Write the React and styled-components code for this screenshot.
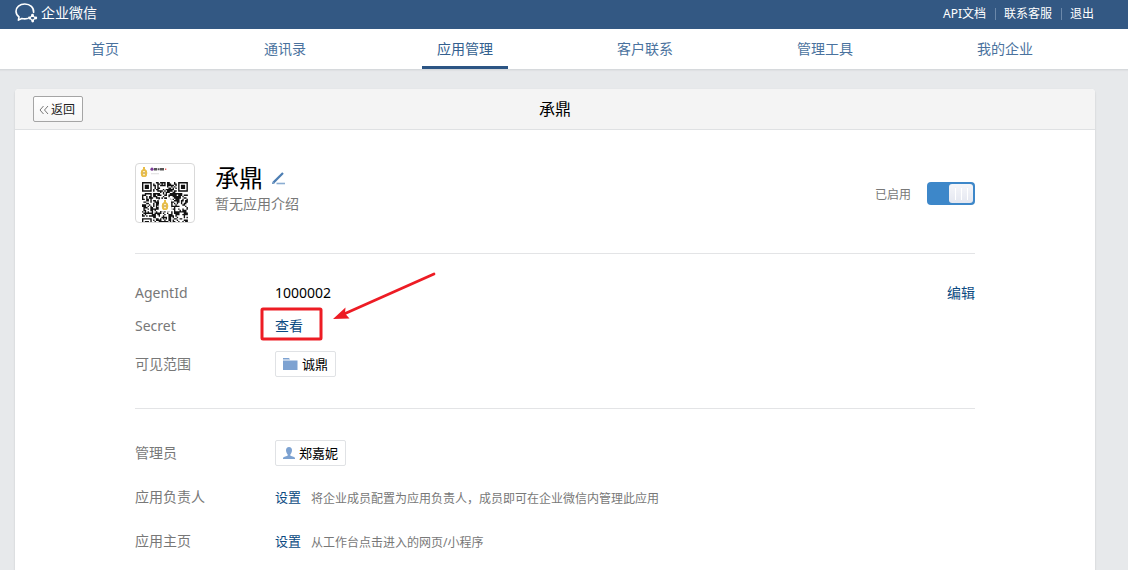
import React from "react";
import styled, { createGlobalStyle } from "styled-components";

const GlobalStyle = createGlobalStyle`
  * { box-sizing: border-box; }
  body {
    margin: 0;
    background: #e7e9eb;
    color: #000;
    font: 14px/22px "Noto Sans", "Noto Sans CJK SC", sans-serif;
  }
  a { text-decoration: none; color: #0b4a82; }
  h1, h2, p, dl, dt, dd { margin: 0; padding: 0; font-weight: 400; }
  button, input { font: inherit; margin: 0; }
  svg { display: block; flex: none; }
`;

const Page = styled.div`
  min-height: 100vh;
  display: flex;
  flex-direction: column;
`;

const TopBar = styled.header`
  height: 29px;
  padding: 0 34px 0 15px;
  display: flex;
  align-items: center;
  justify-content: space-between;
  background: #335883;
`;

const Brand = styled.a`
  display: flex;
  align-items: center;
  gap: 3px;
  height: 26px;
  align-self: flex-start;
  color: #fff;
  line-height: 26px;
`;

const TopLinks = styled.nav`
  display: flex;
  align-items: center;
  height: 28px;
  align-self: flex-start;
  font-size: 12px;
`;

const TopLink = styled.a`
  color: #fff;
  line-height: 16px;
  & + & {
    position: relative;
    margin-left: 9px;
    padding-left: 9px;
  }
  & + &::before {
    content: "";
    position: absolute;
    left: 0;
    top: 2px;
    height: 12px;
    border-left: 1px solid #6b88aa;
  }
`;

const MainNav = styled.nav`
  display: flex;
  height: 41px;
  padding: 0 33px 0 15px;
  background: #fff;
  border-bottom: 1px solid #d6d9dc;
  box-shadow: 0 1px 1px #dfe1e3;
`;

const NavItem = styled.div`
  flex: 1;
  display: flex;
  justify-content: center;
`;

const NavLink = styled.a`
  height: 40px;
  padding: 0 15px;
  line-height: 40px;
  color: ${(p) => (p.$active ? "#33608f" : "#4a729e")};
  border-bottom: ${(p) => (p.$active ? "3px solid #2c5584" : "0")};
`;

const Panel = styled.main`
  flex: 1;
  margin: 19px 33px 0 15px;
  background: #fff;
  border-radius: 4px 4px 0 0;
  box-shadow: 0 1px 2px rgba(0, 0, 0, 0.15);
`;

const PanelHead = styled.div`
  display: grid;
  grid-template-columns: 1fr auto 1fr;
  align-items: center;
  height: 41px;
  padding: 0 18px;
  background: #f4f4f4;
  border-bottom: 1px solid #dfe1e3;
  border-radius: 4px 4px 0 0;
`;

const PanelTitle = styled.h1`
  font-size: 16px;
`;

const BackButton = styled.button`
  justify-self: start;
  display: flex;
  align-items: center;
  gap: 2px;
  height: 26px;
  padding: 1px 7px 0 5px;
  border: 1px solid #a5a5a5;
  border-radius: 2px;
  background: linear-gradient(#fff, #f6f6f6);
  color: #222;
  font-size: 12px;
  line-height: 24px;
`;

const Content = styled.div`
  padding: 0 120px;
`;

const AppHead = styled.section`
  display: flex;
  padding: 33px 0 30px;
`;

const QrCard = styled.div`
  width: 60px;
  height: 60px;
  border: 1px solid #d9d9d9;
  border-radius: 4px;
  overflow: hidden;
`;

const AppText = styled.div`
  flex: 1;
  padding-left: 20px;
`;

const AppName = styled.h2`
  display: flex;
  align-items: center;
  gap: 9px;
  font-size: 24px;
  line-height: 30px;
`;

const EditButton = styled.button`
  padding: 0;
  border: 0;
  background: none;
`;

const Muted = styled.p`
  color: #787878;
`;

const SwitchLabel = styled.label`
  display: flex;
  align-items: center;
  gap: 16px;
  color: #787878;
  font-size: 12px;
`;

const SwitchText = styled.span`
  padding-top: 3px;
`;

const Switch = styled.input`
  appearance: none;
  width: 48px;
  height: 23px;
  padding: 2px;
  border-radius: 4px;
  background: #3d87c9;
  &::before {
    content: "";
    display: block;
    width: 24px;
    height: 19px;
    margin-left: 20px;
    border-radius: 3px;
    background:
      linear-gradient(#fff, #fff) 6px 4px / 1px 12px no-repeat,
      linear-gradient(#fff, #fff) 12px 4px / 1px 12px no-repeat,
      linear-gradient(#fff, #fff) 18px 4px / 1px 12px no-repeat,
      linear-gradient(#f5f6fa, #e4e7f0);
  }
  &:not(:checked) { background: #bbb; }
  &:not(:checked)::before { margin-left: 0; }
`;

const Details = styled.dl`
  padding: 22px 0;
  border-top: 1px solid #e3e4e6;
`;

const Row = styled.div`
  display: flex;
  align-items: center;
  height: ${(p) => (p.$compact ? "33px" : "44px")};
`;

const Term = styled.dt`
  width: 140px;
  color: #787878;
`;

const Value = styled.dd`
  flex: 1;
  display: flex;
  align-items: center;
  gap: 10px;
`;

const Hint = styled.span`
  padding-top: 3px;
  color: #787878;
  font-size: 12px;
`;

const ActionLink = styled.a`
  font-size: 13px;
`;

const Chip = styled.span`
  display: flex;
  align-items: center;
  gap: 4px;
  height: 26px;
  padding: 0 7px;
  border: 1px solid #e0e2e5;
  border-radius: 2px;
  font-size: 13px;
`;

const Marked = styled.span`
  position: relative;
`;

const Marker = styled.svg`
  position: absolute;
  left: -17px;
  top: -44px;
  pointer-events: none;
`;

const QR_SIZE = 33;

function inFinder(x, y) {
  const corners = [[0, 0], [QR_SIZE - 7, 0], [0, QR_SIZE - 7]];
  for (const [cx, cy] of corners) {
    const dx = x - cx;
    const dy = y - cy;
    if (dx >= -1 && dx <= 7 && dy >= -1 && dy <= 7) {
      const ring = Math.max(Math.abs(dx - 3), Math.abs(dy - 3));
      return ring === 3 || ring <= 1;
    }
  }
  return null;
}

function qrPath() {
  let d = "";
  let seed = 71;
  for (let y = 0; y < QR_SIZE; y++) {
    for (let x = 0; x < QR_SIZE; x++) {
      seed = (seed * 1103515245 + 12345) % 2147483648;
      const finder = inFinder(x, y);
      const dark = finder === null ? seed / 2147483648 > 0.46 : finder;
      if (dark) d += `M${x} ${y}h1v1h-1z`;
    }
  }
  return d;
}

const QR_PATH = qrPath();

function Bottle({ x, y }) {
  return (
    <g transform={`translate(${x} ${y})`}>
      <path d="M2.5 0h2v2l1.8 1.6q1 2.4 0 5.4L5 10H2L.7 9q-1-3 0-5.4L2.5 2z" fill="#e8bd48" />
      <path d="M2.6 4h1.8v4.2H2.6z" fill="#fff3cf" />
      <path d="M3 5h1v2H3z" fill="#a58545" />
    </g>
  );
}

function QrPicture() {
  return (
    <svg width="58" height="58" viewBox="0 0 58 58" role="img" aria-label="承鼎">
      <Bottle x={4.5} y={3} />
      <circle cx="16" cy="5.2" r="1.6" fill="#7b3c96" />
      <path d="M18 4h3v2.4h-3zM21.6 4.2h2v2h-2zM24 4h4v2.4h-4z" fill="#555" />
      <path d="M29 4.5h1.3v1.5H29z" fill="#e66" />
      <path d="M15 9.3h8v1h-8z" fill="#ddd" />
      <path d={QR_PATH} transform="translate(6 18) scale(1.39)" fill="#111" />
      <rect x="23" y="35" width="12" height="12" rx="1" fill="#fff" />
      <Bottle x={25.5} y={36} />
    </svg>
  );
}

function Logo() {
  return (
    <svg width="23" height="20" viewBox="0 0 23 20" fill="none" stroke="#fff">
      <path
        d="M18.6 9.4C19 4.6 15.2 1 9.8 1 4.7 1 1 4.2 1 8.3c0 2.4 1.2 4.2 3 5.6l-.6 3.2 3.4-1.6c2 .5 3.900.5 5.600 0"
        strokeWidth="1.6"
        strokeLinejoin="round"
        strokeLinecap="round"
      />
      <path d="M17.500 12.300L20.400 15 17.500 17.700 14.600 15z" strokeWidth="1.100" />
      <g fill="#fff" stroke="none">
        <circle cx="17.500" cy="12.200" r="1.400" />
        <circle cx="20.800" cy="15" r="1.400" />
        <circle cx="17.700" cy="18" r="1.400" />
        <circle cx="14.400" cy="15" r="1.400" />
      </g>
    </svg>
  );
}

const NAV = ["首页", "通讯录", "应用管理", "客户联系", "管理工具", "我的企业"];

export default function App() {
  return (
    <Page>
      <GlobalStyle />
      <TopBar>
        <Brand href="#home">
          <Logo />
          企业微信
        </Brand>
        <TopLinks>
          <TopLink href="#api">API文档</TopLink>
          <TopLink href="#service">联系客服</TopLink>
          <TopLink href="#logout">退出</TopLink>
        </TopLinks>
      </TopBar>
      <MainNav>
        {NAV.map((name) => (
          <NavItem key={name}>
            <NavLink href="#nav" $active={name === "应用管理"}>{name}</NavLink>
          </NavItem>
        ))}
      </MainNav>
      <Panel>
        <PanelHead>
          <BackButton type="button">
            <svg width="10" height="10" viewBox="0 0 10 10" fill="none" stroke="#777">
              <path d="M4.5 1L1 5l3.5 4M9 1L5.5 5 9 9" />
            </svg>
            返回
          </BackButton>
          <PanelTitle>承鼎</PanelTitle>
        </PanelHead>
        <Content>
          <AppHead>
            <QrCard><QrPicture /></QrCard>
            <AppText>
              <AppName>
                承鼎
                <EditButton type="button" aria-label="编辑名称">
                  <svg width="15" height="13" viewBox="0 0 15 13" fill="none">
                    <path d="M1.6 10.4L11 1" stroke="#4d7eb3" strokeWidth="2.2" />
                    <path d="M0 12l.6-2.6L2.8 11.600z" fill="#4d7eb3" />
                    <path d="M4.500 11.500h8.500" stroke="#8badd2" strokeWidth="1.600" />
                  </svg>
                </EditButton>
              </AppName>
              <Muted>暂无应用介绍</Muted>
            </AppText>
            <SwitchLabel>
              <SwitchText>已启用</SwitchText>
              <Switch type="checkbox" defaultChecked />
            </SwitchLabel>
          </AppHead>
          <Details>
            <Row $compact>
              <Term>AgentId</Term>
              <Value>1000002</Value>
              <dd><a href="#edit">编辑</a></dd>
            </Row>
            <Row $compact>
              <Term>Secret</Term>
              <Value>
                <Marked>
                  <a href="#secret">查看</a>
                  <Marker width="180" height="72" viewBox="0 0 180 72" fill="none" stroke="#ed1c24">
                    <rect x="4" y="38" width="59" height="30" rx="1" strokeWidth="3" />
                    <path d="M176 3L86 43" strokeWidth="2.8" strokeLinecap="round" />
                    <path d="M75 48L87.500 36.500L87 42.500L91.500 47.500z" fill="#ed1c24" stroke="none" />
                  </Marker>
                </Marked>
              </Value>
            </Row>
            <Row>
              <Term>可见范围</Term>
              <Value>
                <Chip>
                  <svg width="15" height="12" viewBox="0 0 15 12" fill="#7da2d1">
                    <path d="M0 0h6l1 1.500H0zM0 2.500h14.500V12H0z" />
                  </svg>
                  诚鼎
                </Chip>
              </Value>
            </Row>
          </Details>
          <Details>
            <Row>
              <Term>管理员</Term>
              <Value>
                <Chip>
                  <svg width="12" height="13" viewBox="0 0 12 13" fill="#7da2d1">
                    <path d="M6 0c2 0 3 1.3 3 3.2S8 6.6 7.4 7.2v1.6c1.800.6 4.600 1.200 4.600 2.400V12H0v-.8C0 10 2.800 9.400 4.600 8.800V7.200C4 6.600 3 5.100 3 3.200S4 0 6 0z" />
                  </svg>
                  郑嘉妮
                </Chip>
              </Value>
            </Row>
            <Row>
              <Term>应用负责人</Term>
              <Value>
                <ActionLink href="#owner">设置</ActionLink>
                <Hint>将企业成员配置为应用负责人，成员即可在企业微信内管理此应用</Hint>
              </Value>
            </Row>
            <Row>
              <Term>应用主页</Term>
              <Value>
                <ActionLink href="#homepage">设置</ActionLink>
                <Hint>从工作台点击进入的网页/小程序</Hint>
              </Value>
            </Row>
          </Details>
        </Content>
      </Panel>
    </Page>
  );
}
